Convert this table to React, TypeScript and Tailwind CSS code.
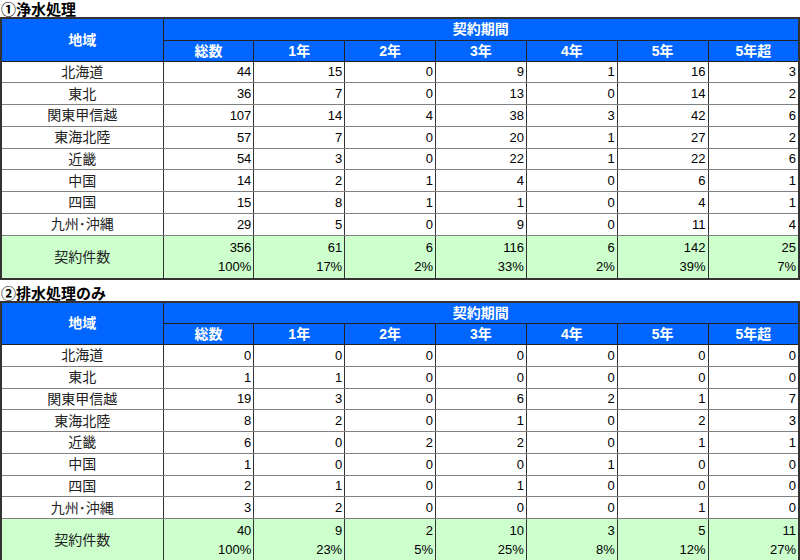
const regions = ['北海道', '東北', '関東甲信越', '東海北陸', '近畿', '中国', '四国', '九州･沖縄'];
const periods = ['総数', '1年', '2年', '3年', '4年', '5年', '5年超'];

type Section = {
  title: string;
  rows: number[][];
  total: number[];
  pct: string[];
};

const sections: Section[] = [
  {
    title: '①浄水処理',
    rows: [
      [44, 15, 0, 9, 1, 16, 3],
      [36, 7, 0, 13, 0, 14, 2],
      [107, 14, 4, 38, 3, 42, 6],
      [57, 7, 0, 20, 1, 27, 2],
      [54, 3, 0, 22, 1, 22, 6],
      [14, 2, 1, 4, 0, 6, 1],
      [15, 8, 1, 1, 0, 4, 1],
      [29, 5, 0, 9, 0, 11, 4],
    ],
    total: [356, 61, 6, 116, 6, 142, 25],
    pct: ['100%', '17%', '2%', '33%', '2%', '39%', '7%'],
  },
  {
    title: '②排水処理のみ',
    rows: [
      [0, 0, 0, 0, 0, 0, 0],
      [1, 1, 0, 0, 0, 0, 0],
      [19, 3, 0, 6, 2, 1, 7],
      [8, 2, 0, 1, 0, 2, 3],
      [6, 0, 2, 2, 0, 1, 1],
      [1, 0, 0, 0, 1, 0, 0],
      [2, 1, 0, 1, 0, 0, 0],
      [3, 2, 0, 0, 0, 1, 0],
    ],
    total: [40, 9, 2, 10, 3, 5, 11],
    pct: ['100%', '23%', '5%', '25%', '8%', '12%', '27%'],
  },
];

function DataTable({ s }: { s: Section }) {
  return (
    <table className="w-[800px] table-fixed border-collapse border-2 border-[#333] text-[13px] leading-none text-black">
      <colgroup>
        <col className="w-[162px]" />
        {periods.map((p) => (
          <col key={p} />
        ))}
      </colgroup>
      <thead>
        <tr className="h-[22px] bg-[#0066ff] text-white">
          <th rowSpan={2} className="border border-[#222] text-[14px] font-bold">
            地域
          </th>
          <th colSpan={7} className="border border-[#222] text-[14px] font-bold">
            契約期間
          </th>
        </tr>
        <tr className="h-[21px] bg-[#0066ff] text-white">
          {periods.map((p) => (
            <th key={p} className="border border-[#222] text-[14px] font-bold">
              {p}
            </th>
          ))}
        </tr>
      </thead>
      <tbody>
        {s.rows.map((r, i) => (
          <tr key={regions[i]} className="h-[21.75px] bg-white">
            <td className="border-x border-x-[#333] border-y border-y-[#808080] text-center text-[14px] text-[#222]">{regions[i]}</td>
            {r.map((v, j) => (
              <td key={j} className="border-x border-x-[#333] border-y border-y-[#808080] pr-[2px] text-right">
                {v}
              </td>
            ))}
          </tr>
        ))}
        <tr className="h-[42px] bg-[#ccffcc]">
          <td className="border border-[#333] text-center text-[14px] text-[#222]">契約件数</td>
          {s.total.map((v, j) => (
            <td key={j} className="border border-[#333] pr-[2px] text-right">
              <div className="flex h-[42px] flex-col justify-around py-[2px]">
                <span>{v}</span>
                <span>{s.pct[j]}</span>
              </div>
            </td>
          ))}
        </tr>
      </tbody>
    </table>
  );
}

export default function App() {
  return (
    <div className="w-[800px] h-[560px] overflow-hidden bg-white font-['Liberation_Sans','Noto_Sans_CJK_JP',sans-serif]">
      {sections.map((s, i) => (
        <div key={s.title}>
          <div className={`${i === 0 ? 'h-[17px]' : 'h-[21px] pt-[4px]'} flex items-end pl-[1px] text-[15px] font-bold leading-none text-black`}>
            {s.title}
          </div>
          <DataTable s={s} />
        </div>
      ))}
    </div>
  );
}
